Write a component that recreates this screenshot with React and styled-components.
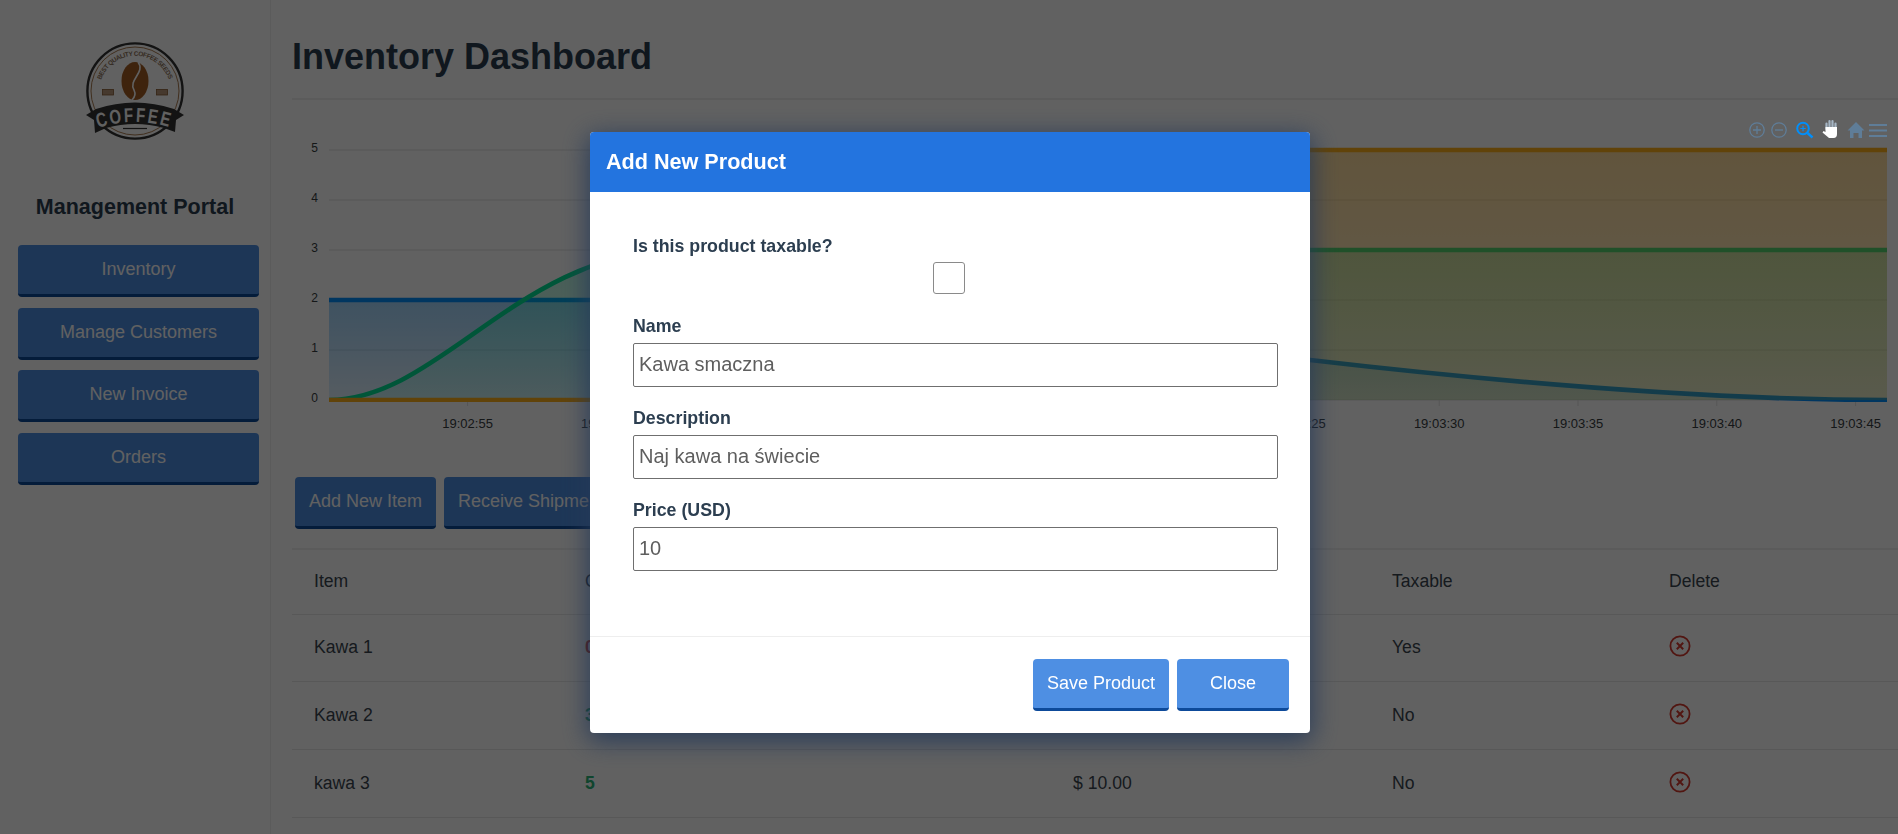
import React from 'react';
import styled, { createGlobalStyle } from 'styled-components';

const GlobalStyle = createGlobalStyle`
  html, body {
    margin: 0;
    padding: 0;
    height: 100%;
    overflow: hidden;
    background: #fff;
    font-family: "Liberation Sans", Arial, sans-serif;
    color: #3a4650;
  }
  * { box-sizing: border-box; }
`;

// Page layout
const Page = styled.div`
  display: flex;
  height: 834px;
  overflow: hidden;
`;

const Sidebar = styled.aside`
  flex: 0 0 271px;
  border-right: 1px solid #f0f0f0;
  padding-top: 42px;
`;

const LogoWrap = styled.div`
  display: flex;
  justify-content: center;
  height: 98px;
`;

const PortalTitle = styled.h3`
  margin: 54px 0 25px;
  font-size: 21.5px;
  line-height: 26px;
  font-weight: bold;
  text-align: center;
  color: #2c3e50;
`;

const SideNav = styled.nav`
  display: flex;
  flex-direction: column;
  gap: 10.5px;
  padding: 0 11px 0 18px;
`;

const Button = styled.button`
  height: 52px;
  padding: 0 14px;
  min-width: ${(p) => p.$minWidth || 0}px;
  border: 0;
  border-bottom: 3px solid #0d4a9a;
  border-radius: 4px;
  background: #4e8fe3;
  color: #fff;
  font-family: inherit;
  font-size: 18px;
  white-space: nowrap;
`;

const Main = styled.main`
  flex: 1;
  min-width: 0;
  padding-left: 21px;
`;

const PageHeader = styled.header`
  height: 100px;
  border-bottom: 2px solid #f0f0f0;
`;

const PageTitle = styled.h1`
  margin: 0;
  padding: 37px 0 0 0;
  font-size: 36px;
  line-height: 40px;
  font-weight: bold;
  color: #2c3e50;
`;

const ChartWrap = styled.div`
  position: relative;
  height: 377px;
`;

const ChartSvg = styled.svg`
  display: block;
`;

const Toolbar = styled.svg`
  position: absolute;
  top: 18px;
  right: 3px;
  z-index: 20;
`;

const ActionRow = styled.div`
  display: flex;
  gap: 8px;
  padding-left: 3px;
  margin-bottom: 19px;
`;

const Table = styled.table`
  width: 1606px;
  table-layout: fixed;
  border-collapse: collapse;
  border-top: 2px solid #f0f0f0;
  font-size: 17.6px;
`;

const Cell = styled.td`
  height: ${(p) => p.$height || 68}px;
  padding: 0 0 0 22px;
  border-bottom: 1px solid #e8e8e8;
  font-weight: normal;
  text-align: left;
`;

const Stock = styled.span`
  font-weight: bold;
  color: ${(p) => (p.$low ? '#d63a2f' : '#2bb57a')};
`;

const DeleteIcon = styled.svg`
  display: block;
  margin-top: -3px;
`;

// Modal
const Backdrop = styled.div`
  position: fixed;
  inset: 0;
  z-index: 10;
  display: flex;
  justify-content: center;
  align-items: flex-start;
  padding: 132px 0 0 2px;
  background: rgba(0, 0, 0, 0.62);
`;

const Modal = styled.div`
  width: 720px;
  border-radius: 4px;
  overflow: hidden;
  background: #fff;
  box-shadow: 0 6px 26px 2px rgba(38, 58, 88, 0.95);
`;

const ModalHeader = styled.div`
  display: flex;
  align-items: center;
  height: 60px;
  padding-left: 16px;
  background: #2374df;
  color: #fff;
  font-size: 21.6px;
  font-weight: bold;
`;

const ModalBody = styled.div`
  display: flex;
  flex-direction: column;
  gap: 20px;
  padding: 43px 32px 65px 43px;
`;

const Field = styled.div`
  display: flex;
  flex-direction: column;
  gap: 6px;
`;

const Label = styled.label`
  height: 22px;
  font-size: 17.8px;
  line-height: 22px;
  font-weight: bold;
  color: #2c3e50;
`;

const CheckRow = styled.div`
  display: flex;
  justify-content: center;
  padding: 0 14px 1px 0;
  margin-top: -1px;
`;

const CheckBox = styled.input`
  appearance: none;
  width: 32px;
  height: 32px;
  margin: 0;
  background: #fff;
  border: 1px solid #8a8a8a;
  border-radius: 3px;
`;

const Input = styled.input`
  height: 44px;
  padding: 0 5px 1px;
  border: 1px solid #6f6f6f;
  border-radius: 2px;
  background: #fff;
  color: #5e5e5e;
  font-family: inherit;
  font-size: 20px;
`;

const ModalFooter = styled.div`
  display: flex;
  justify-content: flex-end;
  gap: 8px;
  padding: 22px 21px 22px 0;
  border-top: 1px solid #eee;
`;

// Chart data
const plot = { left: 329, right: 1887, top: 150, bottom: 400 };

const series = [
  {
    color: '#008ffb',
    line: 'M329 300 L700 300 C1000 300 1180 345 1310 360 C1500 382 1700 400 1887 400',
    top: 300,
    from: 0.36,
    to: 0.12,
  },
  {
    color: '#00e396',
    line: 'M329 400 C440 400 520 250 680 250 L1887 250',
    top: 250,
    from: 0.28,
    to: 0.1,
  },
  {
    color: '#feb019',
    line: 'M329 400 L700 400 C850 400 850 150 1000 150 L1887 150',
    top: 150,
    from: 0.42,
    to: 0.2,
  },
];

const gridLines = [5, 4, 3, 2, 1, 0];
const times = ['19:02:55', '19:03:00', '19:03:05', '19:03:10', '19:03:15', '19:03:20', '19:03:25', '19:03:30', '19:03:35', '19:03:40', '19:03:45'];

const products = [
  { id: 1, name: 'Kawa 1', stock: 0, price: '$ 10.00', taxable: 'Yes', height: 67 },
  { id: 2, name: 'Kawa 2', stock: 3, price: '$ 10.00', taxable: 'No', height: 68 },
  { id: 3, name: 'kawa 3', stock: 5, price: '$ 10.00', taxable: 'No', height: 68 },
];

const columnWidths = [271, 488, 319, 277, 251];

function CoffeeLogo() {
  return (
    <svg width="98" height="98" viewBox="0 0 98 98">
      <defs>
        <path id="logo-top-arc" d="M15 38 A36 36 0 0 1 83 38" />
        <path id="logo-banner-arc" d="M12 86 Q49 74 86 86" />
      </defs>
      <circle cx="49" cy="49" r="47.6" fill="#fff" stroke="#333" strokeWidth="2.4" />
      <circle cx="49" cy="49" r="44" fill="none" stroke="#a06c3c" strokeWidth="0.9" />
      <text fontFamily="Liberation Sans, sans-serif" fontSize="6.5" fontWeight="bold" fill="#8d7258">
        <textPath href="#logo-top-arc" textLength="88" lengthAdjust="spacing">BEST QUALITY COFFEE SEEDS</textPath>
      </text>
      <ellipse cx="49" cy="39" rx="13.5" ry="19" fill="#a45e24" />
      <path d="M52 20 C60 30 42 38 48 48 C50 52 49 55 46 58" fill="none" stroke="#fff" strokeWidth="1.6" />
      <rect x="16.5" y="47.5" width="11" height="5.5" fill="#b8977a" stroke="#8a5c34" strokeWidth="0.8" />
      <rect x="70.5" y="47.5" width="11" height="5.5" fill="#b8977a" stroke="#8a5c34" strokeWidth="0.8" />
      <path d="M0 73 L10 67 Q49 54 88 67 L98 73 L90 78 L89 90 L78 86 Q49 78 20 86 L9 91 L8 78 Z" fill="#333" />
      <text fontFamily="Liberation Sans, sans-serif" fontSize="20" fontWeight="bold" letterSpacing="3" fill="#fff">
        <textPath href="#logo-banner-arc" textLength="74" lengthAdjust="spacingAndGlyphs">COFFEE</textPath>
      </text>
      <path d="M37 86.5 H61" stroke="#333" strokeWidth="1.2" />
    </svg>
  );
}

function SalesChart() {
  const xFor = (i) => 467.6 + i * 138.8;
  return (
    <ChartSvg width="1606" height="370" viewBox="292 100 1606 370">
      <defs>
        <clipPath id="plot-clip">
          <rect x={plot.left} y={plot.top - 3} width={plot.right - plot.left} height={plot.bottom - plot.top + 5} />
        </clipPath>
        {series.map((s, i) => (
          <linearGradient key={i} id={`fill-${i}`} gradientUnits="userSpaceOnUse" x1="0" y1={s.top} x2="0" y2={plot.bottom}>
            <stop offset="0" stopColor={s.color} stopOpacity={s.from} />
            <stop offset="1" stopColor={s.color} stopOpacity={s.to} />
          </linearGradient>
        ))}
      </defs>

      {gridLines.map((v, i) => (
        <g key={v}>
          <line x1={plot.left} x2={plot.right} y1={150 + i * 50} y2={150 + i * 50} stroke="#e0e0e0" />
          <text x="318" y={151.5 + i * 50} textAnchor="end" fontSize="12" fontFamily="Liberation Sans" fill="#373d3f">{v}</text>
        </g>
      ))}

      {times.map((t, i) => (
        <g key={t}>
          <line x1={xFor(i)} x2={xFor(i)} y1="400" y2="406" stroke="#e0e0e0" />
          <text x={xFor(i)} y="427.5" textAnchor="middle" fontSize="13" fontFamily="Liberation Sans" fill="#373d3f">{t}</text>
        </g>
      ))}

      <g clipPath="url(#plot-clip)">
        {series.map((s, i) => (
          <g key={s.color}>
            <path d={`${s.line} L1887 ${plot.bottom} L329 ${plot.bottom} Z`} fill={`url(#fill-${i})`} />
            <path d={s.line} fill="none" stroke={s.color} strokeWidth="4.6" />
          </g>
        ))}
      </g>
    </ChartSvg>
  );
}

function ChartToolbar() {
  const stroke = '#5f7d98';
  return (
    <Toolbar width="150" height="24" viewBox="1745 118 150 24">
      <circle cx="1757" cy="130" r="7.2" fill="none" stroke={stroke} strokeWidth="1.3" />
      <path d="M1757 126 V134 M1753 130 H1761" stroke={stroke} strokeWidth="1.3" />
      <circle cx="1779" cy="130" r="7.2" fill="none" stroke={stroke} strokeWidth="1.3" />
      <path d="M1775 130 H1783" stroke={stroke} strokeWidth="1.3" />
      <circle cx="1803" cy="128.5" r="5.8" fill="none" stroke="#008ffb" strokeWidth="2" />
      <path d="M1807.5 133 L1812.5 137.5" stroke="#008ffb" strokeWidth="2.4" />
      <path d="M1803 125.8 V131.2 M1800.3 128.5 H1805.7" stroke="#008ffb" strokeWidth="1.2" />
      <path d="M1826.5 129 V123.5 M1829.5 129 V121 M1832.5 129 V121 M1835.5 129 V123.5" stroke="#a6b6c5" strokeWidth="2.2" strokeLinecap="round" />
      <path d="M1825.5 127 H1837 V134 Q1837 138 1833.5 138 H1829 L1822.5 132.5 L1823.5 131 L1825.5 132 Z" fill="#fff" />
      <path d="M1856 122 L1864.5 130.5 H1862 V138 H1858.5 V133 H1853.5 V138 H1850 V130.5 H1847.5 Z" fill={stroke} />
      <path d="M1869 125 H1887 M1869 130.5 H1887 M1869 136 H1887" stroke={stroke} strokeWidth="1.8" />
    </Toolbar>
  );
}

function CloseCircle() {
  return (
    <DeleteIcon width="22" height="22" viewBox="0 0 22 22">
      <circle cx="11" cy="11" r="9.6" fill="none" stroke="#d63a2f" strokeWidth="1.8" />
      <path d="M7.8 7.8 L14.2 14.2 M14.2 7.8 L7.8 14.2" stroke="#d63a2f" strokeWidth="2" />
    </DeleteIcon>
  );
}

export default function App() {
  return (
    <>
      <GlobalStyle />
      <Page>
        <Sidebar>
          <LogoWrap>
            <CoffeeLogo />
          </LogoWrap>
          <PortalTitle>Management Portal</PortalTitle>
          <SideNav>
            <Button>Inventory</Button>
            <Button>Manage Customers</Button>
            <Button>New Invoice</Button>
            <Button>Orders</Button>
          </SideNav>
        </Sidebar>

        <Main>
          <PageHeader>
            <PageTitle>Inventory Dashboard</PageTitle>
          </PageHeader>

          <ChartWrap>
            <SalesChart />
            <ChartToolbar />
          </ChartWrap>

          <ActionRow>
            <Button>Add New Item</Button>
            <Button>Receive Shipment</Button>
          </ActionRow>

          <Table>
            <colgroup>
              {columnWidths.map((w) => (
                <col key={w} width={w} />
              ))}
            </colgroup>
            <thead>
              <tr>
                <Cell as="th" $height={65}>Item</Cell>
                <Cell as="th" $height={65}>Quantity</Cell>
                <Cell as="th" $height={65}>Unit Price</Cell>
                <Cell as="th" $height={65}>Taxable</Cell>
                <Cell as="th" $height={65}>Delete</Cell>
              </tr>
            </thead>
            <tbody>
              {products.map((item) => (
                <tr key={item.id}>
                  <Cell $height={item.height}>{item.name}</Cell>
                  <Cell $height={item.height}>
                    <Stock $low={item.stock === 0}>{item.stock}</Stock>
                  </Cell>
                  <Cell $height={item.height}>{item.price}</Cell>
                  <Cell $height={item.height}>{item.taxable}</Cell>
                  <Cell $height={item.height}>
                    <CloseCircle />
                  </Cell>
                </tr>
              ))}
            </tbody>
          </Table>
        </Main>
      </Page>

      <Backdrop>
        <Modal>
          <ModalHeader>Add New Product</ModalHeader>
          <ModalBody>
            <Field>
              <Label>Is this product taxable?</Label>
              <CheckRow>
                <CheckBox type="checkbox" />
              </CheckRow>
            </Field>
            <Field>
              <Label>Name</Label>
              <Input defaultValue="Kawa smaczna" />
            </Field>
            <Field>
              <Label>Description</Label>
              <Input defaultValue="Naj kawa na świecie" />
            </Field>
            <Field>
              <Label>Price (USD)</Label>
              <Input defaultValue="10" />
            </Field>
          </ModalBody>
          <ModalFooter>
            <Button>Save Product</Button>
            <Button $minWidth={112}>Close</Button>
          </ModalFooter>
        </Modal>
      </Backdrop>
    </>
  );
}
